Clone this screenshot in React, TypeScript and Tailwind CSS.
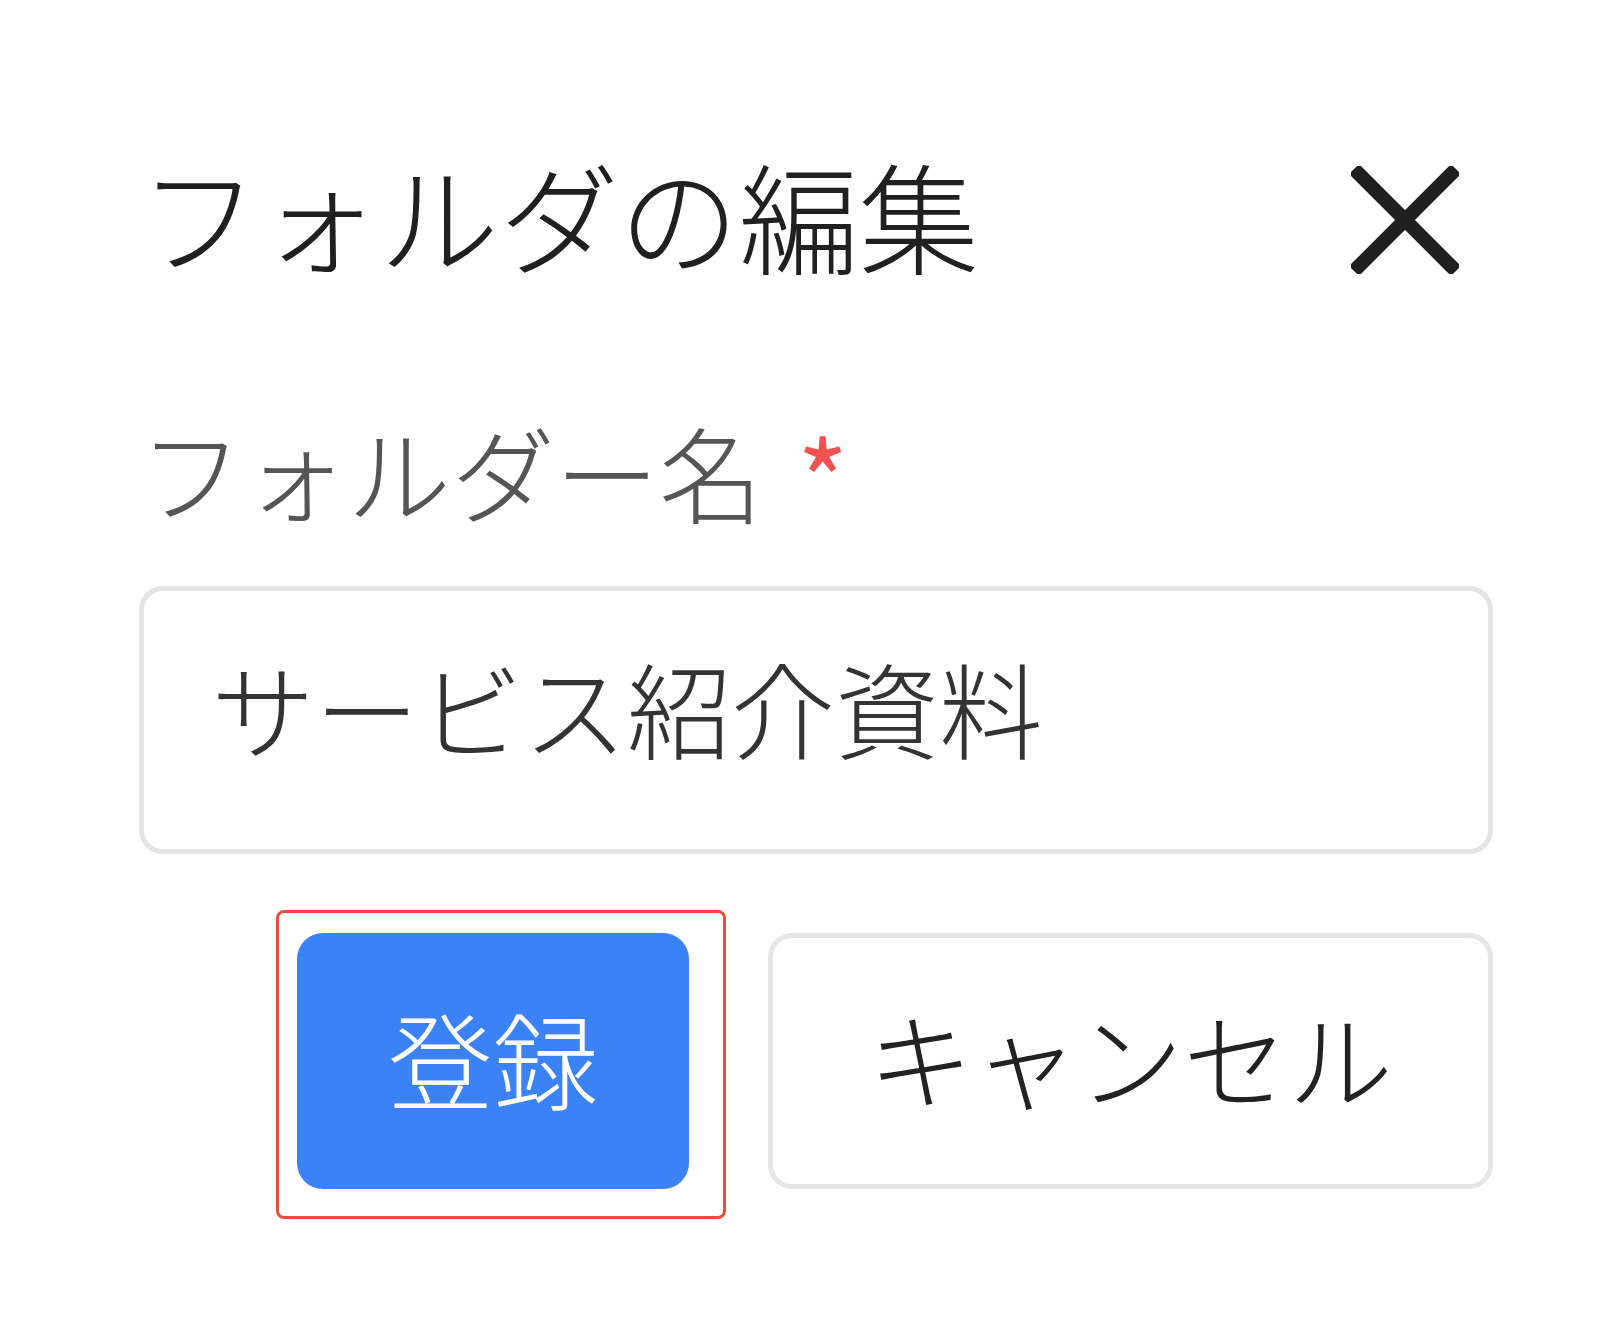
import React from 'react';

const font = {
  fontFamily: '"Noto Sans CJK JP", "Noto Sans CJK SC", sans-serif',
};

function CloseIcon() {
  return (
    <svg width="108" height="108" viewBox="0 0 108 108" fill="none">
      <path d="M8 8L100 100M100 8L8 100" stroke="#1f1f1f" strokeWidth="14" strokeLinecap="square" />
    </svg>
  );
}

export default function App() {
  return (
    <div className="min-h-[1328px] bg-white" style={font}>
      <div className="ml-[139px] w-[1354px] pt-[160px]">
        <div className="flex h-[120px] items-center justify-between">
          <h2 className="-mt-[12px] text-[120px] leading-none font-light text-[#202020]">フォルダの編集</h2>
          <button className="mr-[34px] flex items-center">
            <CloseIcon />
          </button>
        </div>

        <div className="mt-[148px] flex h-[104px] items-center">
          <span className="-mt-[18px] text-[104px] leading-none font-light text-[#555555]">フォルダー名</span>
          <span className="ml-[34px] -mt-[8px] text-[110px] leading-none text-[#f05252]">*</span>
        </div>

        <div className="mt-[54px] flex h-[268px] items-center rounded-[24px] border-[5px] border-[#e4e4e4] px-[67px] pb-[26px]">
          <span className="text-[104px] leading-none font-light text-[#333333]">サービス紹介資料</span>
        </div>

        <div className="mt-[79px] flex justify-end gap-[79px]">
          <div className="relative">
            <button className="flex h-[256px] w-[392px] items-center justify-center rounded-[26px] bg-[#3b82f6] pb-[10px] text-[105px] leading-none font-light text-white">
              登録
            </button>
            <div className="absolute -top-[23px] -left-[21px] -right-[37px] -bottom-[30px] rounded-[8px] border-[3px] border-[#e5503c]" />
          </div>
          <button className="flex h-[256px] w-[725px] items-center justify-center rounded-[24px] border-[5px] border-[#e6e6e6] bg-white pb-[12px] text-[105px] leading-none font-light text-[#222222]">
            キャンセル
          </button>
        </div>
      </div>
    </div>
  );
}
